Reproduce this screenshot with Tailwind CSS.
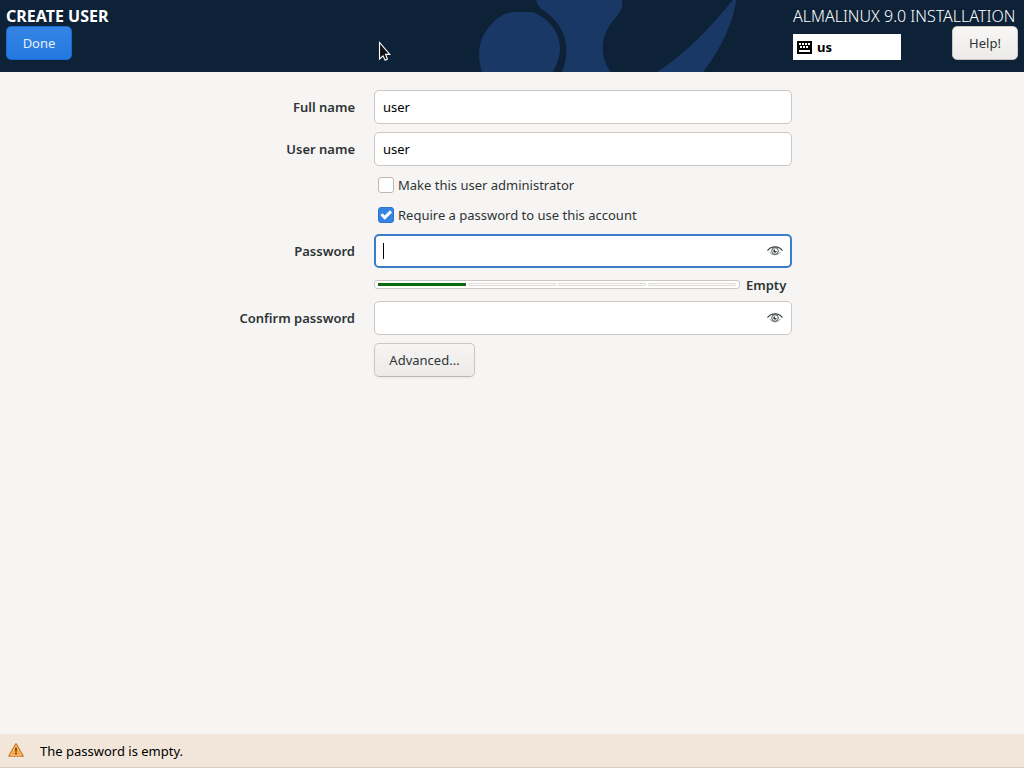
<!doctype html>
<html lang="en">
    <head>
        <meta charset="UTF-8" />
        <meta name="viewport" content="width=device-width, initial-scale=1.0" />
        <title>Create User</title>
        <script src="https://cdn.jsdelivr.net/npm/@tailwindcss/browser@4"></script>
    </head>
    <body
        class="flex flex-col min-h-screen bg-[#f6f5f3] text-[#2e3436] text-[13px] leading-5 font-['Noto_Sans',sans-serif]"
    >
        <!-- Header -->
        <header
            class="relative flex justify-between h-[72px] px-1.5 pt-1.5 bg-[#0d2137] text-white overflow-hidden"
        >
            <svg
                class="absolute top-0 left-1/2 -translate-x-1/2"
                width="1024"
                height="72"
                viewBox="0 0 1024 72"
                fill="#1a3866"
                aria-hidden="true"
            >
                <path d="M482 72C477 56 478 40 489 27C496 18 504 13 513 12H532C547 17 560 31 560 48C560 58 556 65 553 72Z" />
                <path d="M536 0H622C623 7 621 11 616 17C605 29 600 44 604 58C606 65 608 69 611 72H562C566 63 567 53 566 44C563 26 553 17 543 10C539 7 537 4 536 0Z" />
                <path d="M736 0C733 25 718 53 703 72H657C685 54 711 27 733 0Z" />
            </svg>

            <div class="relative flex flex-col items-start">
                <h1 class="text-base leading-5 font-bold">CREATE USER</h1>
                <button
                    type="button"
                    class="w-[66px] h-[34px] rounded-[5px] border border-[#1b6acb] bg-linear-to-b from-[#3584e4] to-[#2379e2] text-[#e6f0fc]"
                >
                    Done
                </button>
            </div>

            <div class="relative flex flex-col w-[225px]">
                <h2 class="text-base leading-5 font-light whitespace-nowrap">
                    ALMALINUX 9.0 INSTALLATION
                </h2>
                <div class="flex justify-between items-end">
                    <button
                        type="button"
                        class="flex items-center gap-[5px] w-[108px] h-[26px] px-1 bg-white text-black font-bold"
                    >
                        <svg width="15" height="13" viewBox="0 0 15 13" aria-hidden="true">
                            <path
                                fill="#000"
                                fill-rule="evenodd"
                                d="M0 0h15v13H0zM2 2v2h2V2zM5 2v2h2V2zM8 2v2h2V2zM11 2v2h2V2zM3 5v2h2V5zM6 5v2h2V5zM9 5v2h2V5zM2 9v2h11V9z"
                            />
                        </svg>
                        us
                    </button>
                    <button
                        type="button"
                        class="w-[66px] h-[34px] rounded-[5px] border border-[#cdc7c2] bg-linear-to-b from-[#f8f7f6] to-[#edebe9] text-[#2e3436]"
                    >
                        Help!
                    </button>
                </div>
            </div>

            <!-- Mouse pointer -->
            <svg
                class="absolute left-[378px] top-[41px]"
                width="14"
                height="21"
                viewBox="0 0 14 21"
                aria-hidden="true"
            >
                <path
                    d="M1.5 1.5V18L5 14.8L7.2 19.2L9.4 18.2L7.6 13.4H11.8Z"
                    fill="#111"
                    stroke="#fff"
                    stroke-width="1.1"
                />
            </svg>
        </header>

        <!-- User form -->
        <main class="flex-1 pt-[18px]">
            <form
                class="grid grid-cols-[123px_1fr] gap-x-[19px] gap-y-2 items-center w-full max-w-[560px] mx-auto"
            >
                <label for="full-name" class="text-right font-semibold">Full name</label>
                <input
                    id="full-name"
                    type="text"
                    value="user"
                    class="h-[34px] px-2 rounded-[5px] border border-[#cdc7c2] bg-white text-black outline-none"
                />

                <label for="user-name" class="text-right font-semibold">User name</label>
                <input
                    id="user-name"
                    type="text"
                    value="user"
                    class="h-[34px] px-2 rounded-[5px] border border-[#cdc7c2] bg-white text-black outline-none"
                />

                <label class="col-start-2 flex items-center gap-1 h-[22px] pl-1">
                    <input
                        type="checkbox"
                        class="appearance-none size-4 rounded-[3px] border border-[#bfb8b1] bg-white"
                    />
                    Make this user administrator
                </label>

                <label class="relative col-start-2 flex items-center gap-1 h-[22px] pl-1">
                    <input
                        type="checkbox"
                        checked
                        class="appearance-none size-4 rounded-[3px] border border-[#2b73cc] bg-[#3584e4]"
                    />
                    <svg
                        class="absolute left-1 top-[3px] pointer-events-none"
                        width="16"
                        height="16"
                        viewBox="0 0 16 16"
                        aria-hidden="true"
                    >
                        <path
                            d="M3.4 7.2L6.8 10.6L13 4.4"
                            fill="none"
                            stroke="#fff"
                            stroke-width="3"
                        />
                    </svg>
                    Require a password to use this account
                </label>

                <label for="password" class="text-right font-semibold">Password</label>
                <div class="relative">
                    <input
                        id="password"
                        type="password"
                        class="block w-full h-[34px] pl-2 pr-9 rounded-[5px] border-2 border-[#3b7ccb] bg-white caret-transparent outline-none"
                    />
                    <span class="absolute left-[9px] top-[9px] w-px h-4 bg-black"></span>
                    <button
                        type="button"
                        aria-label="Show password"
                        class="absolute right-[9px] top-[9px]"
                    >
                        <svg width="16" height="16" viewBox="0 0 16 16" fill="none" stroke="#3d4244">
                            <path d="M.5 7.6C2.6 4.9 5.2 3.9 8 3.9S13.4 4.9 15.5 7.6" stroke-width="1.1" />
                            <path d="M2.6 9C4 11 6 11.8 8 11.8S12 11 13.4 9" stroke-width=".5" />
                            <circle cx="8" cy="8" r="3.3" stroke-width=".9" />
                            <path d="M8 6.2A1.8 1.8 0 1 0 9.8 8H8Z" fill="#3d4244" stroke="none" />
                        </svg>
                    </button>
                </div>

                <!-- Password strength -->
                <div class="col-start-2 flex items-center gap-1.5 h-[17px]">
                    <div
                        role="meter"
                        aria-label="Password strength"
                        aria-valuemin="0"
                        aria-valuemax="4"
                        aria-valuenow="1"
                        class="grid grid-cols-4 gap-0.5 w-[366px] h-[9px] px-[3px] py-0.5 rounded-[3px] border border-[#cdc7c2] bg-white"
                    >
                        <span class="h-[3px] bg-[#0a6b0a] border-x border-[#3a463a]"></span>
                        <span class="h-[3px] rounded-[1px] border border-[#dedad6]"></span>
                        <span class="h-[3px] rounded-[1px] border border-[#dedad6]"></span>
                        <span class="h-[3px] rounded-[1px] border border-[#dedad6]"></span>
                    </div>
                    <span class="font-semibold">Empty</span>
                </div>

                <label for="confirm" class="text-right font-semibold">Confirm password</label>
                <div class="relative">
                    <input
                        id="confirm"
                        type="password"
                        class="block w-full h-[34px] pl-2 pr-9 rounded-[5px] border border-[#cdc7c2] bg-white outline-none"
                    />
                    <button
                        type="button"
                        aria-label="Show confirmation"
                        class="absolute right-[9px] top-[9px]"
                    >
                        <svg width="16" height="16" viewBox="0 0 16 16" fill="none" stroke="#3d4244">
                            <path d="M.5 7.6C2.6 4.9 5.2 3.9 8 3.9S13.4 4.9 15.5 7.6" stroke-width="1.1" />
                            <path d="M2.6 9C4 11 6 11.8 8 11.8S12 11 13.4 9" stroke-width=".5" />
                            <circle cx="8" cy="8" r="3.3" stroke-width=".9" />
                            <path d="M8 6.2A1.8 1.8 0 1 0 9.8 8H8Z" fill="#3d4244" stroke="none" />
                        </svg>
                    </button>
                </div>

                <button
                    type="button"
                    class="col-start-2 justify-self-start w-[101px] h-[34px] rounded-[5px] border border-[#cdc7c2] border-b-[#bfb8b1] bg-linear-to-b from-[#f6f5f4] to-[#edebe9] shadow-xs"
                >
                    Advanced...
                </button>
            </form>
        </main>

        <!-- Message bar -->
        <footer
            class="flex items-center gap-4 h-[34px] px-2 bg-[#f2e6da] border-b border-[#d9cdc3] text-black"
        >
            <svg width="16" height="16" viewBox="0 0 16 16" aria-hidden="true">
                <path
                    d="M8 .9L15.1 13.1H.9Z"
                    fill="#f8a63c"
                    stroke="#cf7a26"
                    stroke-width="1.5"
                    stroke-linejoin="round"
                />
                <path d="M8 2.8L13.4 12.2H2.6Z" fill="none" stroke="#fccb85" stroke-width=".9" />
                <path d="M7.2 4.8H8.8L8.5 8.8H7.5ZM7.2 9.8H8.8V11.3H7.2Z" fill="#3b2408" />
            </svg>
            <p role="status">The password is empty.</p>
        </footer>
    </body>
</html>
